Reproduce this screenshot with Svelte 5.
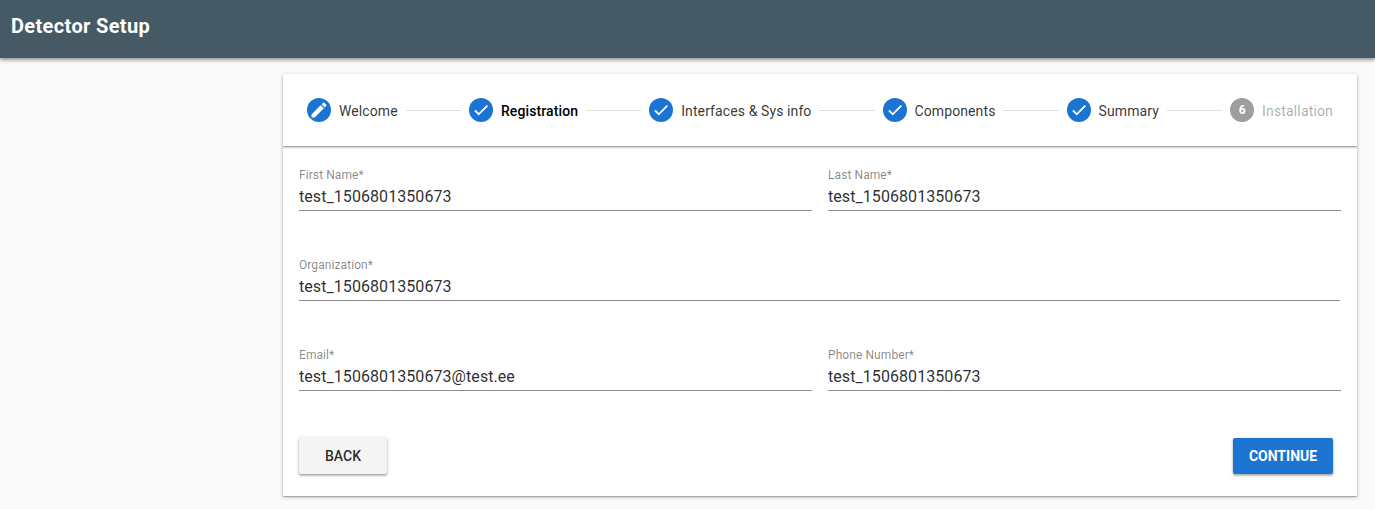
<script>
  const steps = [
    { label: 'Welcome', state: 'edit' },
    { label: 'Registration', state: 'done', active: true },
    { label: 'Interfaces & Sys info', state: 'done' },
    { label: 'Components', state: 'done' },
    { label: 'Summary', state: 'done' },
    { label: 'Installation', state: 'pending' }
  ];

  const icons = {
    edit: 'M3 17.25V21h3.75L17.81 9.94l-3.75-3.75L3 17.25zM20.71 7.04c.39-.39.39-1.02 0-1.41l-2.34-2.34c-.39-.39-1.02-.39-1.41 0l-1.83 1.83 3.75 3.75 1.83-1.83z',
    done: 'M9 16.17L4.83 12l-1.42 1.41L9 19 21 7l-1.41-1.41z'
  };

  const rows = $state([
    [
      { id: 'first-name', label: 'First Name*', value: 'test_1506801350673' },
      { id: 'last-name', label: 'Last Name*', value: 'test_1506801350673' }
    ],
    [{ id: 'organization', label: 'Organization*', value: 'test_1506801350673' }],
    [
      { id: 'email', label: 'Email*', value: 'test_1506801350673@test.ee' },
      { id: 'phone', label: 'Phone Number*', value: 'test_1506801350673' }
    ]
  ]);
</script>

<div class="page">
<header class="toolbar"><h1>Detector Setup</h1></header>

<main class="card">
  <nav class="stepper">
    {#each steps as step, i}
      {#if i > 0}<span class="line"></span>{/if}
      <div class="step" class:active={step.active} class:pending={step.state === 'pending'}>
        <span class="circle">
          {#if icons[step.state]}
            <svg viewBox="0 0 24 24" class={step.state}><path d={icons[step.state]} /></svg>
          {:else}{i + 1}{/if}
        </span>
        <span class="label">{step.label}</span>
      </div>
    {/each}
  </nav>

  <form class="form">
    {#each rows as row}
      <div class="row" class:single={row.length === 1}>
        {#each row as field}
          <div class="field">
            <label for={field.id}>{field.label}</label>
            <input id={field.id} type="text" bind:value={field.value} />
          </div>
        {/each}
      </div>
    {/each}
    <div class="actions">
      <button type="button" class="back">BACK</button>
      <button type="button" class="continue">CONTINUE</button>
    </div>
  </form>
</main>
</div>

<style>
  :global(body) {
    background: #fafafa;
  }

  .page {
    box-sizing: border-box;
    min-height: 100vh;
    font-family: Roboto, sans-serif;
    color: rgba(0, 0, 0, 0.8);
  }

  .toolbar {
    box-sizing: border-box;
    height: 58px;
    padding: 14px 11px 0;
    background: #455a64;
    box-shadow: 0 1px 5px rgba(0, 0, 0, 0.45), 0 2px 3px rgba(0, 0, 0, 0.12);
  }

  h1 {
    margin: 0;
    color: #fff;
    font-size: 20px;
    font-weight: 700;
    line-height: 24px;
    letter-spacing: 0.35px;
  }

  .card {
    box-sizing: border-box;
    width: 1074px;
    height: 422px;
    margin: 16px 0 0 283px;
    background: #fff;
    box-shadow: 0 1px 4px rgba(0, 0, 0, 0.26), 0 1px 1px rgba(0, 0, 0, 0.2);
  }

  .stepper {
    box-sizing: border-box;
    height: 72px;
    padding: 0 24px;
    display: flex;
    align-items: center;
    background: #fff;
    box-shadow: 0 1px 3px rgba(0, 0, 0, 0.33), 0 1px 1px rgba(0, 0, 0, 0.18);
    clip-path: inset(0 0 -6px 0);
  }

  .step {
    display: flex;
    align-items: center;
    gap: 8px;
  }

  .circle {
    width: 24px;
    height: 24px;
    border-radius: 50%;
    display: flex;
    align-items: center;
    justify-content: center;
    background: #1b74d1;
    color: #fff;
    font-size: 12px;
    font-weight: 700;
  }

  .circle svg {
    width: 18px;
    height: 18px;
    fill: #fff;
    stroke: #fff;
    stroke-width: 0.6;
  }

  .circle svg.edit {
    width: 20px;
    height: 20px;
    stroke: none;
  }

  .label {
    font-size: 14px;
    line-height: 20px;
    padding-top: 2px;
    white-space: nowrap;
    letter-spacing: 0.1px;
  }

  .active .label {
    font-weight: 500;
    color: #000;
    letter-spacing: 0.11px;
  }

  .pending .circle {
    background: #9e9e9e;
  }

  .pending .label {
    color: rgba(0, 0, 0, 0.34);
    letter-spacing: 0.15px;
  }

  .line {
    flex: 1;
    height: 1px;
    margin: 0 8px;
    background: #dedede;
  }

  .form {
    padding: 21px 16px 0;
  }

  .row {
    display: grid;
    grid-template-columns: 513px 513px;
    column-gap: 16px;
    height: 90px;
  }

  .row.single {
    grid-template-columns: 1041px;
  }

  .field label {
    display: block;
    font-size: 12px;
    line-height: 16px;
    letter-spacing: 0.08px;
    color: rgba(0, 0, 0, 0.48);
  }

  .field input {
    display: block;
    box-sizing: border-box;
    width: 100%;
    height: 28px;
    padding: 2px 0 3px;
    border: 0;
    border-bottom: 1px solid #8c8c8c;
    background: none;
    outline: none;
    font: 16px/22px Roboto, sans-serif;
    letter-spacing: 0.07px;
    color: rgba(0, 0, 0, 0.84);
  }

  .actions {
    display: flex;
    justify-content: space-between;
    align-items: flex-start;
    padding-right: 8px;
  }

  button {
    height: 36px;
    padding: 0;
    border: 0;
    border-radius: 2px;
    font: 500 14px/36px Roboto, sans-serif;
    box-shadow: 0 1px 3px rgba(0, 0, 0, 0.3), 0 2px 2px rgba(0, 0, 0, 0.14);
  }

  .back {
    width: 88px;
    height: 37px;
    background: #f4f4f4;
    color: rgba(0, 0, 0, 0.84);
  }

  .continue {
    width: 100px;
    margin-top: 1px;
    background: #1b74d1;
    color: #fff;
    font-weight: 700;
  }
</style>
